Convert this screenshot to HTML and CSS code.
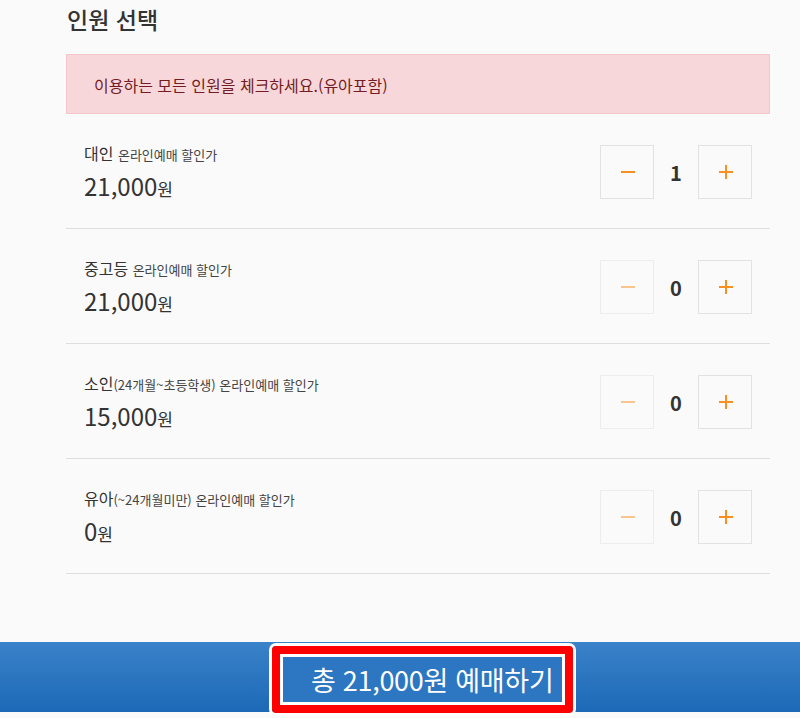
FILE: index.html
```html
<!DOCTYPE html>
<html lang="ko">
<head>
<meta charset="utf-8">
<link rel="stylesheet" href="styles.css">
</head>
<body>
<main class="page">
  <h2 class="title">인원 선택</h2>
  <div class="alert">이용하는 모든 인원을 체크하세요.(유아포함)</div>
  <ul class="rows">
    <li class="row">
      <div class="info">
        <div class="label">대인 <span class="sub">온라인예매 할인가</span></div>
        <div class="price">21,000<span class="won">원</span></div>
      </div>
      <div class="counter">
        <button class="btn minus" aria-label="감소"><span class="bar"></span></button>
        <span class="count">1</span>
        <button class="btn plus" aria-label="증가"><span class="bar"></span><span class="bar v"></span></button>
      </div>
    </li>
    <li class="row">
      <div class="info">
        <div class="label">중고등 <span class="sub">온라인예매 할인가</span></div>
        <div class="price">21,000<span class="won">원</span></div>
      </div>
      <div class="counter">
        <button class="btn minus off" aria-label="감소"><span class="bar"></span></button>
        <span class="count">0</span>
        <button class="btn plus" aria-label="증가"><span class="bar"></span><span class="bar v"></span></button>
      </div>
    </li>
    <li class="row">
      <div class="info">
        <div class="label">소인<span class="sub">(24개월~초등학생) 온라인예매 할인가</span></div>
        <div class="price">15,000<span class="won">원</span></div>
      </div>
      <div class="counter">
        <button class="btn minus off" aria-label="감소"><span class="bar"></span></button>
        <span class="count">0</span>
        <button class="btn plus" aria-label="증가"><span class="bar"></span><span class="bar v"></span></button>
      </div>
    </li>
    <li class="row">
      <div class="info">
        <div class="label">유아<span class="sub">(~24개월미만) 온라인예매 할인가</span></div>
        <div class="price">0<span class="won">원</span></div>
      </div>
      <div class="counter">
        <button class="btn minus off" aria-label="감소"><span class="bar"></span></button>
        <span class="count">0</span>
        <button class="btn plus" aria-label="증가"><span class="bar"></span><span class="bar v"></span></button>
      </div>
    </li>
  </ul>
</main>
<footer class="bottom">
  <div class="hl-outer">
    <div class="hl-red">
      <div class="hl-inner">
        <div class="book">총 21,000원 예매하기</div>
      </div>
    </div>
  </div>
</footer>
</body>
</html>
```

FILE: styles.css
```css
* { box-sizing: border-box; }
html, body { margin: 0; padding: 0; }
body {
  width: 800px;
  height: 718px;
  overflow: hidden;
  background: #fafafa;
  font-family: "Noto Sans CJK KR", "Noto Sans", sans-serif;
  color: #333;
}
.page {
  margin-left: 66px;
  width: 704px;
  height: 642px;
}
.title {
  margin: 0;
  padding-top: 3px;
  height: 54px;
  font-size: 23px;
  font-weight: 500;
  line-height: 32px;
  padding-left: 1px;
  color: #333;
}
.alert {
  height: 60px;
  background: #f8d7da;
  border: 1px solid #f5c6cb;
  color: #721c24;
  font-size: 16px;
  line-height: 60px;
  padding-left: 27px;
}
.rows { list-style: none; margin: 0; padding: 0; }
.row {
  height: 115px;
  border-bottom: 1px solid #dedede;
  display: flex;
  align-items: center;
  justify-content: space-between;
  padding: 0 18px;
}
.info { padding-top: 3px; }
.label {
  font-size: 16px;
  line-height: 24px;
  color: #333;
}
.sub { font-size: 13px; color: #444; }
.price {
  margin-top: 4px;
  font-size: 24px;
  line-height: 30px;
  color: #333;
}
.won { font-size: 17px; }
.counter {
  display: flex;
  align-items: center;
  margin-top: 2px;
}
.btn {
  width: 54px;
  height: 54px;
  border: 1px solid #e2e2e2;
  background: #fafafa;
  position: relative;
  padding: 0;
}
.btn .bar {
  position: absolute;
  left: 20px;
  top: 25px;
  width: 14px;
  height: 2px;
  background: #f7901e;
}
.btn .bar.v {
  left: 26px;
  top: 19px;
  width: 2px;
  height: 14px;
}
.btn.off { border-color: #ededed; }
.btn.off .bar { background: #f9c48e; }
.count {
  width: 44px;
  text-align: center;
  font-size: 20px;
  font-weight: 700;
  color: #333;
}
.bottom {
  height: 70px;
  background: linear-gradient(#3a82c9, #1d69b7);
  display: flex;
  justify-content: center;
  align-items: flex-start;
  padding-top: 1px;
  padding-left: 45px;
}
.hl-outer {
  border: 3px solid #fff;
  border-radius: 7px;
}
.hl-red {
  border: 8px solid #ff0000;
  border-radius: 4px;
}
.hl-inner {
  border: 3px solid #fff;
}
.book {
  width: 279px;
  height: 45px;
  background: #2c76c2;
  color: #fff;
  font-size: 27px;
  line-height: 45px;
  padding-left: 28px;
  white-space: nowrap;
  letter-spacing: -0.3px;
}
```
